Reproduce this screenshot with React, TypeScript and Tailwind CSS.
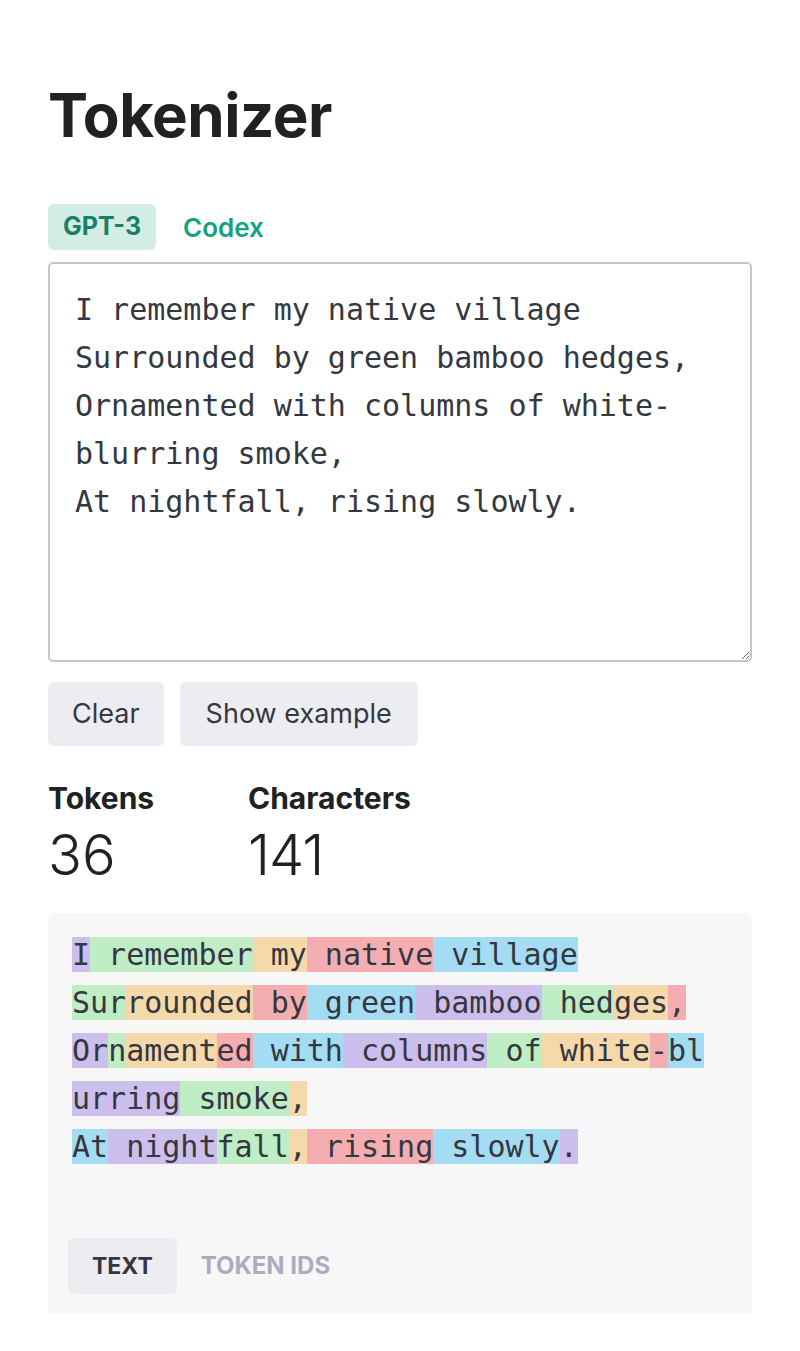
const sample =
  "I remember my native village\nSurrounded by green bamboo hedges,\nOrnamented with columns of white-blurring smoke,\nAt nightfall, rising slowly.";

const colors = [
  "bg-[rgba(107,64,216,0.3)]",
  "bg-[rgba(104,222,122,0.4)]",
  "bg-[rgba(244,172,54,0.4)]",
  "bg-[rgba(239,65,70,0.4)]",
  "bg-[rgba(39,181,234,0.4)]",
];

// each visual line, tokens with their index in the colour cycle
const lines: [string, number][][] = [
  [["I", 0], [" remember", 1], [" my", 2], [" native", 3], [" village", 4]],
  [["Sur", 1], ["rounded", 2], [" by", 3], [" green", 4], [" bamboo", 0], [" hed", 1], ["ges", 2], [",", 3]],
  [["Or", 0], ["n", 1], ["ament", 2], ["ed", 3], [" with", 4], [" columns", 0], [" of", 1], [" white", 2], ["-", 3], ["bl", 4]],
  [["urring", 0], [" smoke", 1], [",", 2]],
  [["At", 4], [" night", 0], ["fall", 1], [",", 2], [" rising", 3], [" slowly", 4], [".", 0]],
];

const mono = "font-['DejaVu_Sans_Mono',monospace]";

export default function App() {
  return (
    <main className="min-h-screen bg-white px-12 pt-[77px] pb-10 font-['Inter',sans-serif] text-[#353740]">
      <h1 className="text-[60px] leading-[76px] font-bold tracking-[-0.5px] text-[#202123]">Tokenizer</h1>

      <div className="mt-[51px] flex items-center gap-3">
        <button className="h-[46px] px-[15px] rounded-[6px] bg-[#d1ede5] text-[25px] font-bold text-[#1a7f64]">
          GPT-3
        </button>
        <button className="h-[46px] px-[15px] text-[26px] font-semibold text-[#10a37f]">Codex</button>
      </div>

      <textarea
        className={`mt-3 block w-full h-[400px] border-2 border-[#c5c5d2] rounded-[5px] px-[25px] py-[22px] text-[30px] leading-[48px] text-[#353740] outline-none ${mono}`}
        defaultValue={sample}
      />

      <div className="mt-5 flex gap-4">
        <button className="h-16 px-6 rounded-[6px] bg-[#ececf1] text-[27px] text-[#353740]">Clear</button>
        <button className="h-16 px-[26px] rounded-[6px] bg-[#ececf1] text-[27px] text-[#353740]">Show example</button>
      </div>

      <div className="mt-[34px] flex">
        <div className="w-[200px]">
          <div className="text-[30px] leading-[36px] font-bold text-[#202123]">Tokens</div>
          <div className="mt-[9px] text-[56px] leading-[60px] font-light text-[#202123]">36</div>
        </div>
        <div>
          <div className="text-[30px] leading-[36px] font-bold text-[#202123]">Characters</div>
          <div className="mt-[9px] text-[56px] leading-[60px] font-light tracking-[-1px] text-[#202123]">141</div>
        </div>
      </div>

      <div className="mt-[28px] rounded-[6px] bg-[#f7f7f8] px-5 pt-[18px] pb-5">
        <div className={`pl-1 text-[30px] leading-[48px] text-[#353740] whitespace-pre ${mono}`}>
          {lines.map((line, i) => (
            <div key={i}>
              {line.map(([t, c], j) => (
                <span key={j} className={colors[c]}>
                  {t}
                </span>
              ))}
            </div>
          ))}
        </div>
        <div className="mt-[67px] flex">
          <button className="h-14 px-6 rounded-[6px] bg-[#ececf1] text-[23px] font-bold text-[#353740]">TEXT</button>
          <button className="h-14 px-6 text-[24px] font-bold text-[#acacbe]">TOKEN IDS</button>
        </div>
      </div>
    </main>
  );
}
